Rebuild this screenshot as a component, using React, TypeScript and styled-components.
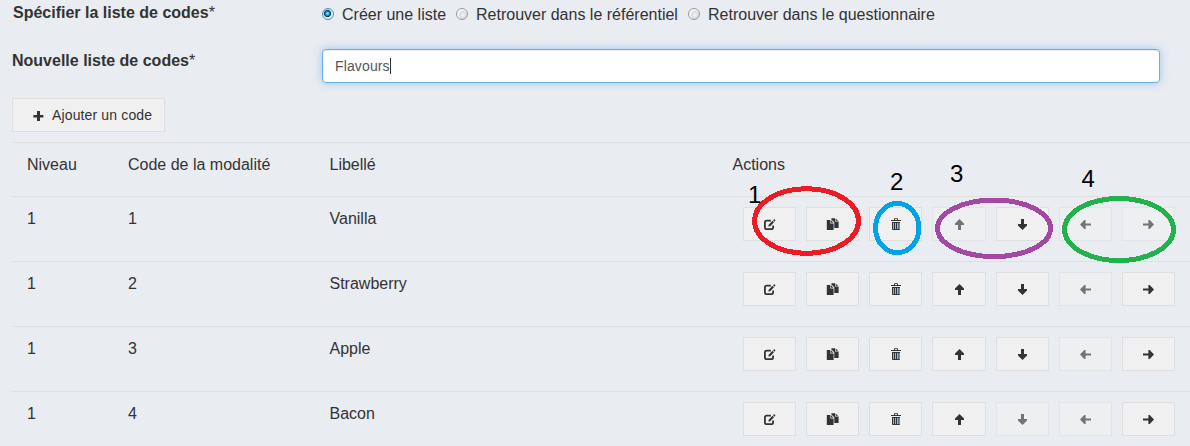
import React from "react";
import styled, { createGlobalStyle } from "styled-components";

const GlobalStyle = createGlobalStyle`
  *, *::before, *::after { box-sizing: border-box; }
  body {
    margin: 0;
    background: #e9ecf1;
    color: #333;
    font-family: "Liberation Sans", Arial, sans-serif;
    font-size: 16px;
    line-height: 24px;
    overflow: hidden;
  }
`;

const Page = styled.main`
  position: relative;
  width: 1190px;
  height: 446px;
  padding-left: 12px;
  overflow: hidden;
`;

const FormRow = styled.div<{ $height: number }>`
  display: grid;
  grid-template-columns: 310px 838px;
  height: ${(p) => p.$height}px;
`;

const Label = styled.label<{ $top?: number; $indent?: number }>`
  padding: ${(p) => p.$top ?? 0}px 0 0 ${(p) => p.$indent ?? 0}px;
  font-weight: bold;
  white-space: nowrap;
`;

const Star = styled.span`
  font-weight: normal;
`;

const RadioGroup = styled.div`
  display: flex;
  padding-top: 3px;
`;

const RadioOption = styled.label<{ $width: number }>`
  display: flex;
  flex: none;
  width: ${(p) => p.$width}px;
  gap: 8px;
  white-space: nowrap;
`;

const RadioMark = styled.span<{ $checked?: boolean }>`
  flex: none;
  width: 12px;
  height: 12px;
  margin-top: 5px;
  border-radius: 50%;
  border: 1px solid ${(p) => (p.$checked ? "#4d8cab" : "#969899")};
  background: ${(p) =>
    p.$checked
      ? "radial-gradient(circle at 45% 45%, #6fdcfa 0 0.8px, #1795cc 1.8px, #0c3a5c 3.2px, #c9e6f3 3.9px, #e3f3fa 5px)"
      : "radial-gradient(circle at 60% 60%, #f0f1f2 0 1px, #d5d7d9 3.4px, #f6f6f6 4.4px)"};
`;

const TextField = styled.div`
  display: flex;
  align-items: center;
  height: 34px;
  padding: 0 12px;
  border: 1px solid #66afe9;
  border-radius: 4px;
  background: #fff;
  box-shadow: inset 0 1px 1px rgba(0, 0, 0, 0.075), 0 0 8px rgba(102, 175, 233, 0.6);
  color: #555;
  font-size: 14px;
  letter-spacing: 0.13px;
`;

const Caret = styled.span`
  width: 1px;
  height: 16px;
  margin-left: 0.4px;
  background: #333;
`;

const AddButton = styled.button`
  display: flex;
  align-items: center;
  width: 153px;
  height: 34px;
  margin: 0 0 10px;
  padding: 0 0 0 20px;
  gap: 8px;
  border: 1px solid #dfdfdf;
  background: #f0f0f0;
  color: #333;
  font: 14px "Liberation Sans", Arial, sans-serif;
  letter-spacing: 0.14px;
  white-space: nowrap;
`;

const Row = styled.div<{ $height: number }>`
  display: grid;
  grid-template-columns: 101px 201.5px 403px 1fr;
  height: ${(p) => p.$height}px;
  padding: 10px 0 0 15px;
  border-top: 1px solid #dfdfe0;
`;

const Actions = styled.div`
  display: grid;
  grid-template-columns: 53px 53px 53px 54px 53px 53px 53px;
  gap: 10px;
  padding-left: 10.5px;
`;

const ActionButton = styled.button`
  display: flex;
  align-items: center;
  height: 34px;
  padding: 0 0 0 18.5px;
  border: 1px solid #dfdfdf;
  background: #f0f0f0;
  color: #333;

  &:disabled {
    border-color: #e2e4e6;
    background: #edeff0;
    color: #737475;
  }
`;

const Annotations = styled.svg`
  position: absolute;
  inset: 0;
  pointer-events: none;
  font-size: 24px;
`;

type IconName = "edit" | "copy" | "trash" | "up" | "down" | "left" | "right";

const verticalArrow = "M6.5 1 L11 5.6 V7 H8 V12 H5 V7 H2 V5.6 Z";
const horizontalArrow = "M6.5 1 L11 5.3 V6.6 H7.5 V12 H5.5 V6.6 H2 V5.3 Z";

function Icon({ name }: { name: IconName }) {
  const turn = { up: 0, right: 90, down: 180, left: 270 } as Record<string, number>;
  const shifted = name === "up" || name === "trash";
  const arrow = name === "up" || name === "down" ? verticalArrow : horizontalArrow;
  return (
    <svg width="14" height="12" viewBox={shifted ? "-1 0 14 12" : "0 0 14 12"} fill="currentColor">
      {name in turn && <path d={arrow} transform={`rotate(${turn[name]} 6.5 6.5)`} />}
      {name === "edit" && (
        <g transform="translate(.5 0)">
          <path
            d="M7.4 2.6 H3.2 Q1.4 2.6 1.4 4.4 V9.4 Q1.4 11.2 3.2 11.2 H7.8 Q9.6 11.2 9.6 9.4 V7.6"
            fill="none"
            stroke="currentColor"
            strokeWidth="1.8"
          />
          <path d="M4.8 8.6 L5.2 6.7 L9 2.8 L10.5 4.3 L6.7 8.2 Z M9.6 2.2 L10.6 1.1 L12 2.5 L11.1 3.7 Z" />
        </g>
      )}
      {name === "copy" && (
        <>
          <path d="M.8 2 H4.4 V5.5 H7.6 V12 H.8 Z M5 2.2 L7.4 4.7 H5 Z" />
          <path d="M5.4 .2 H9 V3.4 H12.6 V10 H8.3 V4.3 L5.4 1.4 Z M9.6 .6 L12.2 2.8 H9.6 Z" />
        </>
      )}
      {name === "trash" && (
        <>
          <path d="M1 2 H4 V.9 Q4 .2 4.7 .2 H7.3 Q8 .2 8 .9 V2 H11 V3 H1 Z M5 1.1 V2 H7 V1.1 Z" fillRule="evenodd" />
          <path d="M2 4 H10 V11 Q10 12 9 12 H3 Q2 12 2 11 Z" />
          <path d="M3 5H4V11H3Z" fill="#b9a8a4" />
          <path d="M5 5H6V11H5ZM7 5H8V11H7Z" fill="#8fb5da" />
          <path d="M8 5H9V11H8Z" fill="#4a78aa" />
          <path d="M9 5H10V11H9Z" fill="#5b94cb" />
        </>
      )}
    </svg>
  );
}

const actions: { name: IconName; label: string }[] = [
  { name: "edit", label: "Modifier" },
  { name: "copy", label: "Dupliquer" },
  { name: "trash", label: "Supprimer" },
  { name: "up", label: "Monter" },
  { name: "down", label: "Descendre" },
  { name: "left", label: "Niveau supérieur" },
  { name: "right", label: "Niveau inférieur" },
];

const codes: { level: number; code: number; label: string; disabled: IconName[] }[] = [
  { level: 1, code: 1, label: "Vanilla", disabled: ["up", "left", "right"] },
  { level: 1, code: 2, label: "Strawberry", disabled: ["left"] },
  { level: 1, code: 3, label: "Apple", disabled: ["left"] },
  { level: 1, code: 4, label: "Bacon", disabled: ["down", "left"] },
];

export default function App() {
  return (
    <Page>
      <GlobalStyle />
      <FormRow $height={49}>
        <Label $top={1} $indent={1}>
          Spécifier la liste de codes<Star>*</Star>
        </Label>
        <RadioGroup>
          <RadioOption $width={134}>
            <RadioMark $checked />
            Créer une liste
          </RadioOption>
          <RadioOption $width={232}>
            <RadioMark />
            Retrouver dans le référentiel
          </RadioOption>
          <RadioOption $width={260}>
            <RadioMark />
            Retrouver dans le questionnaire
          </RadioOption>
        </RadioGroup>
      </FormRow>
      <FormRow $height={49}>
        <Label>
          Nouvelle liste de codes<Star>*</Star>
        </Label>
        <TextField>
          Flavours
          <Caret />
        </TextField>
      </FormRow>
      <AddButton>
        <svg width="11" height="11" viewBox="0 0 11 11" fill="currentColor">
          <path d="M4 1H7V5H10.4V7.6H7V11H4V7.6H.4V5H4Z" />
        </svg>
        Ajouter un code
      </AddButton>
      <Row $height={54}>
        <span>Niveau</span>
        <span>Code de la modalité</span>
        <span>Libellé</span>
        <span>Actions</span>
      </Row>
      {codes.map((c) => (
        <Row key={c.code} $height={65}>
          <span>{c.level}</span>
          <span>{c.code}</span>
          <span>{c.label}</span>
          <Actions>
            {actions.map((a) => (
              <ActionButton key={a.name} aria-label={a.label} disabled={c.disabled.includes(a.name)}>
                <Icon name={a.name} />
              </ActionButton>
            ))}
          </Actions>
        </Row>
      ))}
      <Annotations width="1190" height="446">
        <g fill="none" strokeWidth="5" shapeRendering="crispEdges">
          <ellipse cx="806.5" cy="221" rx="52" ry="32.3" stroke="#ed1c24" />
          <ellipse cx="897.3" cy="228" rx="21.7" ry="24.6" stroke="#00a2e8" />
          <ellipse cx="994" cy="228.3" rx="56.5" ry="28.3" stroke="#a349a4" />
          <ellipse cx="1119" cy="229.5" rx="54.5" ry="31" stroke="#22b14c" />
        </g>
        <g fill="#000">
          <text x="748" y="203">1</text>
          <text x="890" y="190">2</text>
          <text x="950" y="182">3</text>
          <text x="1081.5" y="187">4</text>
        </g>
      </Annotations>
    </Page>
  );
}
